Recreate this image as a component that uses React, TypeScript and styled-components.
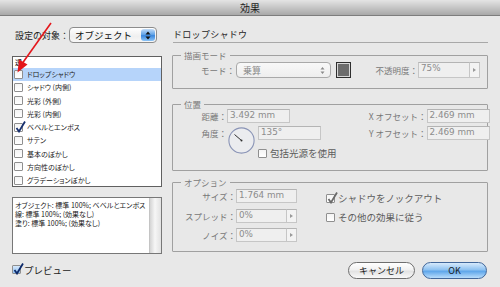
import styled, { createGlobalStyle, css } from "styled-components";

const GlobalStyle = createGlobalStyle`
  html, body { margin: 0; padding: 0; }
  body {
    background: #e8e8e8;
    font-family: "Noto Sans CJK JP", "DejaVu Sans", sans-serif;
  }
`;

const latin = `"DejaVu Sans", "Noto Sans CJK JP", sans-serif`;

const Window = styled.div`
  position: relative;
  width: 500px;
  height: 287px;
  overflow: hidden;
  background: #e8e8e8;
  display: flex;
  flex-direction: column;
`;

const TitleBar = styled.div`
  flex: none;
  height: 16px;
  box-sizing: border-box;
  border-bottom: 1px solid #7d7d7d;
  background: linear-gradient(#e4e4e4, #a8a8a8);
  display: flex;
  align-items: center;
  justify-content: center;
  font-size: 10px;
  line-height: 1;
  color: #1c1c1c;
`;

const Body = styled.div`
  display: flex;
  padding: 11px 0 0 12px;
`;

const LeftCol = styled.div`
  width: 150px;
  display: flex;
  flex-direction: column;
`;

const TargetRow = styled.div`
  height: 16px;
  display: flex;
  align-items: center;
`;

const TargetLabel = styled.span`
  width: 57px;
  box-sizing: border-box;
  padding-left: 3px;
  font-size: 9px;
  color: #222;
  white-space: nowrap;
`;

const AquaSelect = styled.div`
  width: 88px;
  height: 16px;
  box-sizing: border-box;
  border: 1px solid #8c8c8c;
  border-radius: 4px;
  background: linear-gradient(#ffffff, #efefef 60%, #f7f7f7);
  display: flex;
  align-items: center;
  justify-content: space-between;
  padding: 0 1px 0 5px;
  font-size: 9.5px;
  color: #111;
`;

const BlueStepper = styled.span`
  width: 14px;
  height: 12px;
  border-radius: 3px;
  background: linear-gradient(#c3dcf7, #5a9fe6 50%, #3a86dc 55%, #8cc4f7);
  display: flex;
  align-items: center;
  justify-content: center;
`;

const List = styled.div`
  margin-top: 13px;
  height: 131px;
  box-sizing: border-box;
  border: 1px solid #606060;
  background: #fff;
  overflow: hidden;
`;

const ListHeader = styled.div`
  height: 10.5px;
  padding-left: 2px;
  font-size: 7px;
  line-height: 10px;
  color: #111;
`;

const ListRow = styled.div<{ $selected?: boolean }>`
  height: 13.25px;
  display: flex;
  align-items: center;
  gap: 4px;
  padding-left: 1px;
  font-size: 7px;
  font-feature-settings: "palt";
  color: #222;
  background: ${({ $selected }) => ($selected ? "#b6d4fa" : "transparent")};
`;

const Description = styled.div`
  margin-top: 10px;
  height: 57px;
  box-sizing: border-box;
  border: 1px solid #777;
  background: #fff;
  display: flex;
`;

const DescText = styled.div`
  flex: 1;
  padding: 3px 0 0 2px;
  font-size: 7px;
  line-height: 8.8px;
  font-feature-settings: "palt";
  color: #222;
  white-space: nowrap;
  overflow: hidden;
`;

const ScrollTrack = styled.div`
  width: 11px;
  border-left: 1px solid #c4c4c4;
  background: linear-gradient(90deg, #d4d4d4, #f6f6f6 45%, #e2e2e2);
`;

const PreviewRow = styled.div`
  margin-top: 10.5px;
  height: 10px;
  display: flex;
  align-items: center;
  gap: 3px;
  font-size: 9.5px;
  color: #222;
`;

const RightCol = styled.div`
  width: 316px;
  margin-left: 10px;
  display: flex;
  flex-direction: column;
`;

const Heading = styled.div`
  height: 16px;
  margin-left: 1px;
  box-sizing: border-box;
  border-bottom: 1px solid #a8a8a8;
  font-size: 9px;
  line-height: 15px;
  letter-spacing: 0.3px;
  color: #262626;
`;

const Group = styled.div<{ $top: number; $height: number; $pad: number }>`
  position: relative;
  margin-top: ${({ $top }) => $top}px;
  height: ${({ $height }) => $height}px;
  box-sizing: border-box;
  border: 1px solid #a0a0a0;
  border-radius: 1px;
  padding-top: ${({ $pad }) => $pad}px;
  display: flex;
`;

const Legend = styled.span`
  position: absolute;
  top: -7px;
  left: 8px;
  padding: 0 3px;
  background: #e8e8e8;
  font-size: 8.5px;
  line-height: 12px;
  color: #7a7a7a;
`;

const FieldLabel = styled.span<{ $w: number; $h?: number }>`
  flex: none;
  width: ${({ $w }) => $w}px;
  height: ${({ $h }) => $h ?? 14}px;
  text-align: right;
  font-size: 8.5px;
  line-height: ${({ $h }) => $h ?? 14}px;
  color: #777;
  white-space: nowrap;
`;

const Row = styled.div<{ $gapTop?: number }>`
  display: flex;
  align-items: flex-start;
  margin-top: ${({ $gapTop }) => $gapTop ?? 0}px;
`;

const Stack = styled.div<{ $ml?: string; $mr?: number; $pt?: number }>`
  display: flex;
  flex-direction: column;
  margin-left: ${({ $ml }) => $ml ?? "0"};
  margin-right: ${({ $mr }) => $mr ?? 0}px;
  padding-top: ${({ $pt }) => $pt ?? 0}px;
`;

const fieldBox = css`
  box-sizing: border-box;
  border: 1px solid #c6c6c6;
  border-top-color: #b4b4b4;
  background: #efefef;
`;

const Field = styled.div<{ $w: number; $h?: number }>`
  ${fieldBox};
  width: ${({ $w }) => $w}px;
  height: ${({ $h }) => $h ?? 14}px;
  padding-left: 2px;
  font-family: ${latin};
  font-size: 8.8px;
  line-height: 10px;
  color: #8c8c8c;
  white-space: nowrap;
`;

const ArrowBtn = styled.div<{ $h?: number }>`
  ${fieldBox};
  width: 10px;
  height: ${({ $h }) => $h ?? 14}px;
  border-left: none;
  background: #f3f3f3;
  display: flex;
  align-items: center;
  justify-content: center;
  &::after {
    content: "";
    border-left: 3px solid #9a9a9a;
    border-top: 2px solid transparent;
    border-bottom: 2px solid transparent;
  }
`;

const GraySelect = styled.div`
  width: 95px;
  height: 16px;
  margin-left: 1px;
  box-sizing: border-box;
  border: 1px solid #a9a9a9;
  border-radius: 4px;
  background: linear-gradient(#f8f8f8, #eeeeee);
  display: flex;
  align-items: center;
  justify-content: space-between;
  padding: 0 5px 0 6px;
  font-size: 9px;
  color: #8a8a8a;
`;

const Swatch = styled.div`
  width: 15px;
  height: 16px;
  margin-left: 5px;
  box-sizing: border-box;
  border: 1px solid #2e2e2e;
  box-shadow: inset 0 0 0 1px #d8d8d8;
  background: #6c6c6c;
`;

const Dial = styled.svg`
  flex: none;
  margin: 1px 3px 0 1px;
`;

const CheckRow = styled.div<{ $gapTop?: number }>`
  display: flex;
  align-items: center;
  gap: 3px;
  height: 10px;
  margin-top: ${({ $gapTop }) => $gapTop ?? 0}px;
  font-size: 9.5px;
  color: #5c5c5c;
  white-space: nowrap;
`;

const Box = styled.span<{ $size: number; $blue?: boolean }>`
  position: relative;
  flex: none;
  width: ${({ $size }) => $size}px;
  height: ${({ $size }) => $size}px;
  box-sizing: border-box;
  border: 1px solid #8f8f8f;
  border-radius: 1px;
  background: ${({ $blue }) =>
    $blue ? "linear-gradient(#d6e8fb, #8fc0f0)" : "linear-gradient(#f4f4f4, #ffffff)"};
  svg {
    position: absolute;
    left: 0;
    top: -3px;
  }
`;

const ButtonRow = styled.div`
  margin-top: 10px;
  padding-right: 1px;
  display: flex;
  justify-content: flex-end;
  gap: 7px;
`;

const PillButton = styled.div<{ $primary?: boolean; $w: number }>`
  width: ${({ $w }) => $w}px;
  height: 17px;
  box-sizing: border-box;
  border-radius: 9px;
  border: 1px solid ${({ $primary }) => ($primary ? "#42679a" : "#6e6e6e")};
  background: ${({ $primary }) =>
    $primary
      ? "linear-gradient(#d7eafc, #8ec2f1 45%, #5fa6ea 55%, #b9ddfb)"
      : "linear-gradient(#ffffff, #f1f1f1 45%, #e2e2e2 55%, #f9f9f9)"};
  display: flex;
  align-items: center;
  justify-content: center;
  font-size: 9px;
  color: #1a1a1a;
`;

const Pointer = styled.svg`
  position: absolute;
  left: 0;
  top: 0;
  pointer-events: none;
`;

const Check = ({
  checked,
  size = 9,
  blue,
  color = "#17306e",
}: {
  checked?: boolean;
  size?: number;
  blue?: boolean;
  color?: string;
}) => (
  <Box $size={size} $blue={blue}>
    {checked && (
      <svg width={size + 2} height={size + 3} viewBox="0 0 11 12">
        <path d="M1.5 7 L4 10.5 L10 0.5" fill="none" stroke={color} strokeWidth="1.8" />
      </svg>
    )}
  </Box>
);

const effects = [
  { name: "ドロップシャドウ", selected: true },
  { name: "シャドウ (内側)" },
  { name: "光彩 (外側)" },
  { name: "光彩 (内側)" },
  { name: "ベベルとエンボス", checked: true },
  { name: "サテン" },
  { name: "基本のぼかし" },
  { name: "方向性のぼかし" },
  { name: "グラデーションぼかし" },
];

export default function App() {
  return (
    <Window>
      <GlobalStyle />
      <TitleBar>効果</TitleBar>
      <Body>
        <LeftCol>
          <TargetRow>
            <TargetLabel>設定の対象：</TargetLabel>
            <AquaSelect>
              オブジェクト
              <BlueStepper>
                <svg width="6" height="9" viewBox="0 0 6 9">
                  <path d="M3 0.5 L5.5 3.5 H0.5Z M3 8.5 L5.5 5.5 H0.5Z" fill="#111" />
                </svg>
              </BlueStepper>
            </AquaSelect>
          </TargetRow>

          <List>
            <ListHeader>透</ListHeader>
            {effects.map((e) => (
              <ListRow key={e.name} $selected={e.selected}>
                <Check checked={e.checked} />
                {e.name}
              </ListRow>
            ))}
          </List>

          <Description>
            <DescText>
              オブジェクト: 標準 100%; ベベルとエンボス
              <br />
              線: 標準 100%; (効果なし)
              <br />
              塗り: 標準 100%; (効果なし)
            </DescText>
            <ScrollTrack />
          </Description>

          <PreviewRow>
            <Check checked blue size={9} color="#0d2a6b" />
            プレビュー
          </PreviewRow>
        </LeftCol>

        <RightCol>
          <Heading>ドロップシャドウ</Heading>

          <Group $top={12} $height={34} $pad={6}>
            <Legend>描画モード</Legend>
            <Row>
              <FieldLabel $w={62} $h={16}>
                モード：
              </FieldLabel>
              <GraySelect>
                乗算
                <svg width="5" height="9" viewBox="0 0 5 9">
                  <path d="M2.5 1 L4.5 3.5 H0.5Z M2.5 8 L4.5 5.5 H0.5Z" fill="#8a8a8a" />
                </svg>
              </GraySelect>
              <Swatch />
              <FieldLabel $w={67} $h={16}>
                不透明度：
              </FieldLabel>
              <Field $w={52} $h={16}>
                75%
              </Field>
              <ArrowBtn $h={16} />
            </Row>
          </Group>

          <Group $top={15} $height={67} $pad={4}>
            <Legend>位置</Legend>
            <Stack>
              <Row>
                <FieldLabel $w={54}>距離：</FieldLabel>
                <Field $w={63}>3.492 mm</Field>
              </Row>
              <Row $gapTop={3}>
                <FieldLabel $w={54}>角度：</FieldLabel>
                <Dial width="27" height="27" viewBox="0 0 27 27">
                  <circle cx="13.5" cy="13.5" r="12.6" fill="#ebecef" stroke="#8a94b6" strokeWidth="1.1" />
                  <line x1="13.5" y1="13.5" x2="6.5" y2="7.5" stroke="#2f2f2f" strokeWidth="1" />
                  <circle cx="13.5" cy="13.5" r="1" fill="#2f2f2f" />
                </Dial>
                <Stack>
                  <Field $w={63}>135°</Field>
                  <CheckRow $gapTop={8}>
                    <Check size={9} />
                    包括光源を使用
                  </CheckRow>
                </Stack>
              </Row>
            </Stack>
            <Stack $ml="auto" $mr={5}>
              <Row>
                <FieldLabel $w={90}>X オフセット：</FieldLabel>
                <Field $w={63}>2.469 mm</Field>
              </Row>
              <Row $gapTop={3}>
                <FieldLabel $w={90}>Y オフセット：</FieldLabel>
                <Field $w={63}>2.469 mm</Field>
              </Row>
            </Stack>
          </Group>

          <Group $top={11} $height={70} $pad={6}>
            <Legend>オプション</Legend>
            <Stack>
              <Row>
                <FieldLabel $w={63}>サイズ：</FieldLabel>
                <Field $w={61}>1.764 mm</Field>
              </Row>
              <Row $gapTop={6}>
                <FieldLabel $w={63}>スプレッド：</FieldLabel>
                <Field $w={51}>0%</Field>
                <ArrowBtn />
              </Row>
              <Row $gapTop={5}>
                <FieldLabel $w={63}>ノイズ：</FieldLabel>
                <Field $w={51}>0%</Field>
                <ArrowBtn />
              </Row>
            </Stack>
            <Stack $ml="29px" $pt={4}>
              <CheckRow>
                <Check checked size={9} color="#6a6a6a" />
                シャドウをノックアウト
              </CheckRow>
              <CheckRow $gapTop={9}>
                <Check size={9} />
                その他の効果に従う
              </CheckRow>
            </Stack>
          </Group>

          <ButtonRow>
            <PillButton $w={67}>キャンセル</PillButton>
            <PillButton $w={65} $primary>
              OK
            </PillButton>
          </ButtonRow>
        </RightCol>
      </Body>

      <Pointer width="60" height="80" viewBox="0 0 60 80">
        <line x1="51" y1="23" x2="21.5" y2="64.5" stroke="#e4161b" strokeWidth="1.6" />
        <path d="M17.5 72.5 L27.5 64.5 L19 59.5 Z" fill="#e4161b" />
      </Pointer>
    </Window>
  );
}
